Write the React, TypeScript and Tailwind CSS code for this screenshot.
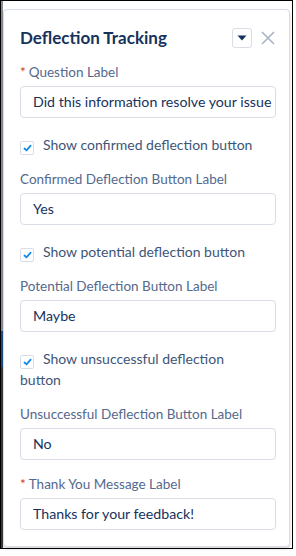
import React from 'react';

const font = { fontFamily: 'Lato, "Liberation Sans", sans-serif' };

const CheckIcon = () => (
  <svg width="9" height="8" viewBox="0 0 9 8" className="block">
    <path d="M1.5 4.5 L3.5 6.3 L7.6 1.6" fill="none" stroke="#1589ee" strokeWidth="1.8" strokeLinecap="round" strokeLinejoin="round" />
  </svg>
);

const Checkbox: React.FC<{ label: string }> = ({ label }) => (
  <label className="block text-[14px] leading-[21px] text-[#3e5578]">
    <span className="inline-flex items-center justify-center w-[14px] h-[14px] border border-[#d8dde6] rounded-[2px] bg-white align-[-2px] mr-[9px]">
      <CheckIcon />
    </span>
    {label}
  </label>
);

const Field: React.FC<{ label: string; value: string; required?: boolean }> = ({ label, value, required }) => (
  <div>
    <div className="text-[13.5px] leading-[18px] text-[#54698d] flex items-center">
      {required && <span className="text-[#c23934] mr-[3px]">*</span>}
      {label}
    </div>
    <div className="mt-[5px] h-[32px] border border-[#d8dde6] rounded-[4px] bg-white flex items-center pl-[12px] overflow-hidden whitespace-nowrap text-[14.2px] text-[#16325c]">
      {value}
    </div>
  </div>
);

export default function App() {
  return (
    <div className="w-[296px] h-[556px] bg-white" style={font}>
      <div className="w-[293px] h-[549px] border border-black bg-white flex">
        <div className="w-[2px] h-full flex flex-col">
          <div className="h-[330px] bg-[#8a8f96]" />
          <div className="h-[36px] bg-[#1c4f8c]" />
          <div className="flex-1 bg-[#3a3a3a]" />
        </div>
        <div className="mt-[8px] mb-[1px] w-[287px] border border-[#d8dde6] rounded-[4px] bg-white shadow-[0_2px_3px_rgba(0,0,0,0.16)] pl-[16px] pr-[13px]">
          <div className="flex items-center justify-between mt-[18px] h-[20px]">
            <h1 className="text-[17px] font-bold text-[#16325c] leading-[20px]">Deflection Tracking</h1>
            <div className="flex items-center gap-[9px] mr-[1px]">
              <div className="w-[20px] h-[20px] border border-[#d8dde6] rounded-[3px] flex items-center justify-center">
                <svg width="10" height="6" viewBox="0 0 10 6"><path d="M0.5 0.5 H9.5 L5 5.5 Z" fill="#16325c" /></svg>
              </div>
              <svg width="14" height="14" viewBox="0 0 14 14">
                <path d="M1.5 1.5 L12.5 12.5 M12.5 1.5 L1.5 12.5" stroke="#a8b7c7" strokeWidth="1.7" strokeLinecap="round" />
              </svg>
            </div>
          </div>
          <div className="mt-[15px] flex flex-col">
            <Field required label="Question Label" value="Did this information resolve your issue" />
            <div className="mt-[16px]"><Checkbox label="Show confirmed deflection button" /></div>
            <div className="mt-[15px]"><Field label="Confirmed Deflection Button Label" value="Yes" /></div>
            <div className="mt-[16px]"><Checkbox label="Show potential deflection button" /></div>
            <div className="mt-[15px]"><Field label="Potential Deflection Button Label" value="Maybe" /></div>
            <div className="mt-[16px] pr-[40px]"><Checkbox label="Show unsuccessful deflection button" /></div>
            <div className="mt-[15px]"><Field label="Unsuccessful Deflection Button Label" value="No" /></div>
            <div className="mt-[15px]"><Field required label="Thank You Message Label" value="Thanks for your feedback!" /></div>
          </div>
        </div>
      </div>
    </div>
  );
}
